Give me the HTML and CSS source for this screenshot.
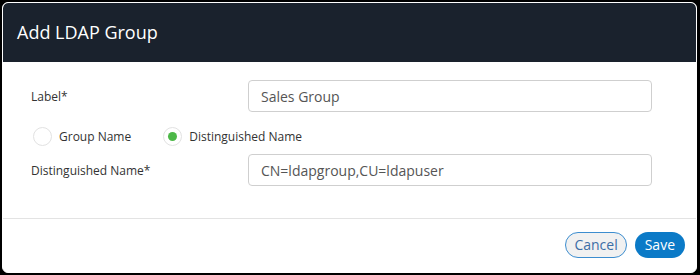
FILE: index.html
```html
<!DOCTYPE html>
<html>
  <head>
    <title>Add LDAP Group</title>
    <link rel="stylesheet" href="styles.css">
  </head>
  <body>
    <div class="dialog">
      <div class="dialog-header">Add LDAP Group</div>

      <div class="dialog-body">
        <div class="form-row">
          <label class="field-label">Label*</label>
          <input class="text-input" type="text" value="Sales Group">
        </div>

        <div class="radio-row">
          <label class="radio-option">
            <span class="radio-circle"></span>
            Group Name
          </label>
          <label class="radio-option">
            <span class="radio-circle checked"></span>
            Distinguished Name
          </label>
        </div>

        <div class="form-row">
          <label class="field-label">Distinguished Name*</label>
          <input class="text-input" type="text" value="CN=ldapgroup,CU=ldapuser">
        </div>
      </div>

      <div class="dialog-footer">
        <button class="cancel-button">Cancel</button>
        <button class="save-button">Save</button>
      </div>
    </div>
  </body>
</html>
```

FILE: styles.css
```css
body {
    margin: 0;
    padding: 2px;
    background-color: #000;
    font-family: "Open Sans", Arial, sans-serif;
}
.dialog {
    width: 693px;
    height: 269px;
    background-color: white;
    border: 1px solid white;
    border-radius: 6px;
    overflow: hidden;
    display: flex;
    flex-direction: column;
}
.dialog-header {
    background-color: #1a222d;
    color: white;
    font-size: 18px;
    height: 59px;
    line-height: 59px;
    padding-left: 14px;
    border-radius: 5px 5px 0 0;
}
.dialog-body {
    padding: 18px 44px 32px 28px;
    border-bottom: 1px solid #e3e3e3;
}
.form-row {
    display: flex;
    align-items: center;
}
.field-label {
    width: 217px;
    font-size: 12px;
    color: #333;
}
.text-input {
    flex: 1;
    height: 32px;
    box-sizing: border-box;
    border: 1px solid #cfcfcf;
    border-radius: 4px;
    padding: 0 12px;
    font-family: "Open Sans", Arial, sans-serif;
    font-size: 14px;
    color: #555;
}
.radio-row {
    display: flex;
    align-items: center;
    height: 22px;
    margin: 13px 0 7px 2px;
}
.radio-option {
    display: flex;
    align-items: center;
    font-size: 12px;
    color: #333;
    margin-right: 32px;
}
.radio-circle {
    width: 17px;
    height: 17px;
    border: 1px solid #e2e2e2;
    border-radius: 50%;
    margin-right: 7px;
    position: relative;
}
.radio-circle.checked::after {
    content: "";
    position: absolute;
    left: 4px;
    top: 4px;
    width: 9px;
    height: 9px;
    border-radius: 50%;
    background-color: #4db848;
}
.dialog-footer {
    flex: 1;
    display: flex;
    justify-content: flex-end;
    align-items: center;
    gap: 8px;
    padding-right: 11px;
    padding-bottom: 2px;
}
.cancel-button {
    height: 26px;
    padding: 0 8px;
    border: 1px solid #3c8dcf;
    border-radius: 13px;
    background-color: #f1f1f1;
    color: #3d6ea6;
    font-family: "Open Sans", Arial, sans-serif;
    font-size: 14px;
    cursor: pointer;
}
.save-button {
    height: 26px;
    padding: 0 10px;
    border: none;
    border-radius: 13px;
    background-color: #0b7ac7;
    color: white;
    font-family: "Open Sans", Arial, sans-serif;
    font-size: 14px;
    cursor: pointer;
}
```
